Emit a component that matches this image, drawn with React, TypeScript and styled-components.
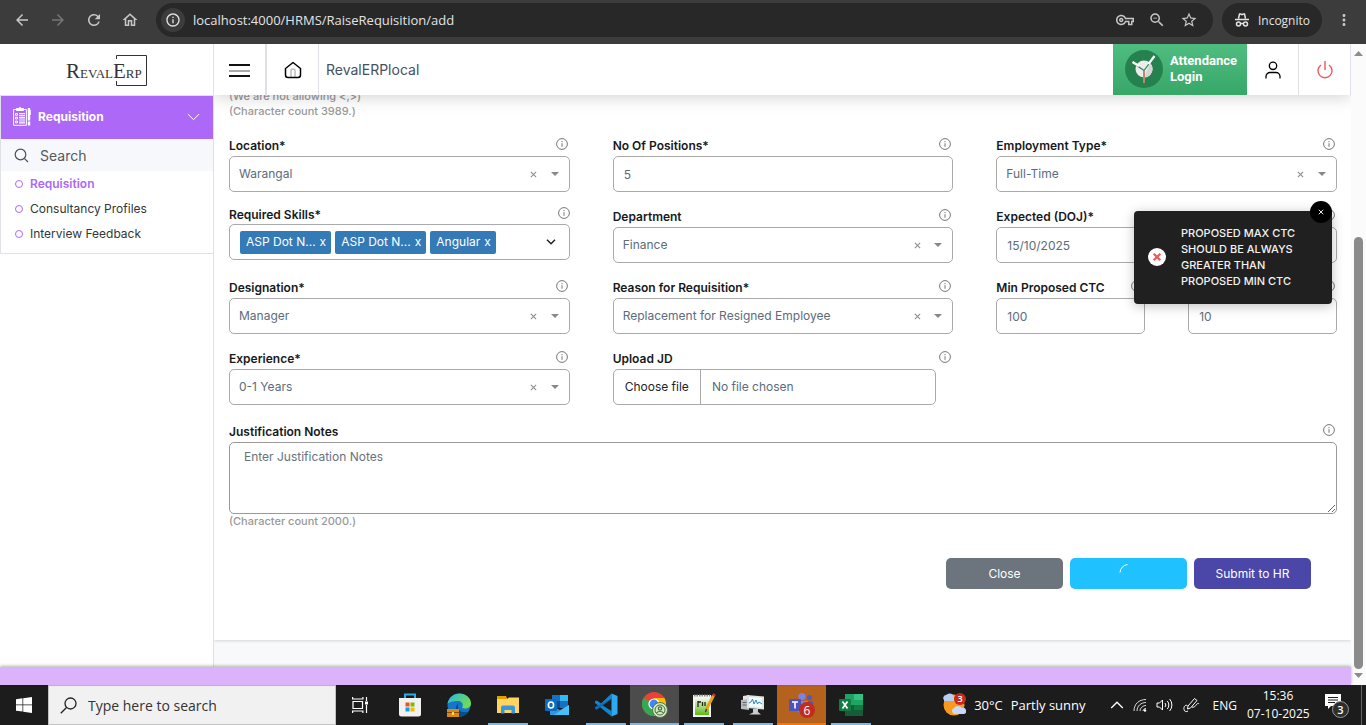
import { useState, type ReactNode } from 'react'
import styled, { createGlobalStyle } from 'styled-components'
import {
  MdArrowBack,
  MdArrowForward,
  MdMoreVert,
  MdOutlineHome,
  MdOutlineInfo,
  MdOutlineVpnKey,
  MdRefresh,
  MdStarBorder,
  MdZoomOut,
} from 'react-icons/md'

const GlobalStyle = createGlobalStyle`
  *, *::before, *::after {
    box-sizing: border-box;
  }

  body {
    margin: 0;
    overflow: hidden;
    font-family: Inter, 'Liberation Sans', sans-serif;
    font-size: 12px;
    color: #212529;
  }

  button, input, select, textarea {
    font: inherit;
    color: inherit;
  }

  button {
    padding: 0;
    border: 0;
    background: none;
    cursor: pointer;
  }

  a {
    color: inherit;
    text-decoration: none;
  }

  svg {
    display: block;
    flex-shrink: 0;
  }
`

const Shell = styled.div`
  display: flex;
  flex-direction: column;
  height: 100vh;
  background: #fff;
`

/* ---------- browser bar ---------- */

const BrowserBar = styled.header`
  display: flex;
  align-items: center;
  flex-shrink: 0;
  height: 44px;
  padding: 0 12px 4px;
  background: #3c3c3c;
  color: #c7c7c7;
  font-family: 'Open Sans', 'Noto Sans', sans-serif;
`

const NavButtons = styled.div`
  display: flex;
  gap: 16px;
  padding: 0 16px 0 0;
`

const NavButton = styled.button<{ $dim?: boolean }>`
  width: 20px;
  height: 20px;
  font-size: 18px;
  display: flex;
  align-items: center;
  justify-content: center;
  color: ${(props) => (props.$dim ? '#757575' : '#c7c7c7')};
`

const AddressBar = styled.div`
  display: flex;
  align-items: center;
  flex: 1;
  min-width: 0;
  height: 34px;
  padding: 0 14px 0 5px;
  border-radius: 17px;
  background: #282828;
`

const SiteInfo = styled.button`
  display: flex;
  align-items: center;
  justify-content: center;
  width: 24px;
  height: 24px;
  border-radius: 12px;
  background: #3c3c3c;
  color: #e3e3e3;
`

const Url = styled.input`
  flex: 1;
  min-width: 0;
  padding: 0 8px;
  border: 0;
  outline: 0;
  background: none;
  color: #e3e3e3;
  font-size: 13px;
`

const AddressActions = styled.div`
  display: flex;
  gap: 12px;
`

const Incognito = styled.div`
  display: flex;
  align-items: center;
  gap: 8px;
  height: 34px;
  margin: 0 12px 0 9px;
  padding: 0 12px;
  border-radius: 17px;
  background: #282828;
  color: #e3e3e3;
  font-size: 12px;
`

/* ---------- page ---------- */

const Page = styled.div`
  display: flex;
  flex: 1;
  min-height: 0;
`

const PageColumn = styled.div`
  display: flex;
  flex-direction: column;
  flex: 1;
  min-width: 0;
`

const Workspace = styled.div`
  display: flex;
  flex: 1;
  min-height: 0;
`

const Footer = styled.footer`
  flex-shrink: 0;
  height: 18px;
  background: #dcb2fb;
  box-shadow: 0 -1px 3px rgba(0, 0, 0, 0.3);
  z-index: 1;
`

const ScrollRail = styled.div`
  display: flex;
  flex-direction: column;
  align-items: center;
  width: 15px;
  padding: 7px 0;
  gap: 4px;
  background: #fbfbfb;
`

const ScrollTrack = styled.div`
  display: flex;
  flex-direction: column;
  flex: 1;
  width: 9px;

  &::before {
    content: '';
    flex: 29;
  }

  &::after {
    content: '';
    flex: 71;
    border-radius: 5px;
    background: #8b8b8b;
  }
`

const Sidebar = styled.aside`
  width: 214px;
  flex-shrink: 0;
  border-right: 1px solid #dee2e6;
`

const LogoBar = styled.div`
  display: flex;
  align-items: center;
  justify-content: center;
  height: 52px;
  border-bottom: 1px solid #dee2e6;
`

const Menu = styled.nav`
  border-left: 1px solid #dee2e6;
  border-bottom: 1px solid #dee2e6;
`

const MenuHead = styled.button`
  display: flex;
  align-items: center;
  width: 100%;
  height: 43px;
  padding: 0 13px 2px 12px;
  gap: 7px;
  background: #ad68f7;
  color: #fff;
  font-size: 12px;
  font-weight: 700;
  text-align: left;

  span {
    flex: 1;
  }
`

const MenuSearch = styled.label`
  display: flex;
  align-items: center;
  gap: 11px;
  height: 32px;
  padding-left: 13px;
  background: #f7f8fb;
  color: #495057;

  input {
    width: 100%;
    padding: 0;
    border: 0;
    outline: 0;
    background: none;
    font-size: 14px;
  }

  input::placeholder {
    color: #55595e;
    opacity: 1;
  }
`

const MenuLink = styled.a<{ $active?: boolean }>`
  display: flex;
  align-items: center;
  gap: 7px;
  height: 25px;
  padding-left: 14px;
  font-size: 12px;
  font-weight: ${(props) => (props.$active ? 600 : 400)};
  color: ${(props) => (props.$active ? '#ad68f7' : '#33363a')};

  &::before {
    content: '';
    width: 8px;
    height: 8px;
    border: 1px solid #ad68f7;
    border-radius: 50%;
  }

  &:last-child {
    margin-bottom: 7px;
  }
`

const Main = styled.main`
  position: relative;
  display: flex;
  flex-direction: column;
  flex: 1;
  min-width: 0;
  overflow: hidden;
  background: #f8f9fb;
`

const TopBar = styled.div`
  display: flex;
  flex-shrink: 0;
  height: 51px;
  background: #fff;
  box-shadow: 0 2px 16px rgba(0, 0, 0, 0.18);
  z-index: 1;
`

const TopCell = styled.button<{ $line?: number; $color?: string }>`
  display: flex;
  align-items: center;
  justify-content: center;
  width: ${(props) => 51 + (props.$line ?? 1)}px;
  border-right: ${(props) => props.$line ?? 1}px solid #dee2e6;
  color: ${(props) => props.$color ?? '#000'};
`

const CompanyName = styled.div`
  display: flex;
  align-items: center;
  flex: 1;
  padding: 0 8px 0 7px;
  font-size: 14px;
  color: #44525f;
`

const AttendanceButton = styled.button`
  display: flex;
  align-items: center;
  gap: 7px;
  padding: 0 10px 2px 12px;
  background: linear-gradient(#4fbd80, #37a768);
  color: #fff;
  font: bold 13px/16px Roboto, sans-serif;
  text-align: left;
`

const Card = styled.form`
  flex-shrink: 0;
  padding: 0 14px 51px 15px;
  background: #fff;
  box-shadow: 0 1px 3px rgba(0, 0, 0, 0.14);
`

const Hint = styled.p`
  margin: 0;
  font-size: 11px;
  line-height: 15px;
  font-weight: 500;
  color: #999;
`

/* the form is scrolled, its first hint is partly under the top bar */
const ScrolledHints = styled.div`
  margin: -6px 0 17px;
`

const FieldGrid = styled.div`
  display: grid;
  grid-template-columns: repeat(3, minmax(0, 1fr));
  gap: 15px 43px;
  margin-bottom: 17px;
`

const SplitField = styled.div`
  display: grid;
  grid-template-columns: repeat(2, minmax(0, 1fr));
  gap: 43px;
`

const FieldBox = styled.div`
  min-width: 0;
`

const FieldHead = styled.div<{ $tight?: boolean }>`
  display: flex;
  justify-content: space-between;
  height: ${(props) => (props.$tight ? 17 : 20)}px;
  padding: ${(props) => (props.$tight ? '0' : '2px 2px 0 0')};
  font-size: 12px;
  font-weight: 600;
  line-height: 16px;
  white-space: nowrap;
  color: #16191c;
`

const Control = styled.div`
  display: flex;
  align-items: center;
  height: 36px;
  border: 1px solid #aaa;
  border-radius: 5px;
  background: #fff;
  color: #5b6c7c;

  select {
    flex: 1;
    min-width: 0;
    height: 100%;
    padding: 0 0 1px 9px;
    border: 0;
    outline: 0;
    appearance: none;
    background: none;
  }
`

const ClearButton = styled.button`
  width: 24px;
  height: 24px;
  display: flex;
  align-items: center;
  justify-content: center;
  color: #8d8d8d;
`

const CaretSlot = styled.span`
  padding: 0 10px 0 5px;
`

const TextInput = styled.input`
  display: block;
  width: 100%;
  height: 36px;
  padding: 0 10px;
  border: 1px solid #aaa;
  border-radius: 5px;
  outline: 0;
  background: #fff;
  color: #5b6c7c;
`

const TagList = styled.div`
  display: flex;
  flex: 1;
  gap: 4px;
  padding-left: 10px;
`

const Tag = styled.span`
  display: flex;
  align-items: center;
  gap: 4px;
  height: 23px;
  padding: 0 5px 2px 6px;
  border-radius: 2px;
  background: #337ab7;
  color: #fff;
`

const SkillToggle = styled.button`
  padding: 0 13px;
`

const FilePicker = styled.label`
  display: flex;
  height: 36px;
  margin-right: 17px;
  border: 1px solid #aaa;
  border-radius: 5px;
  line-height: 34px;
  color: #5b6c7c;

  input {
    position: absolute;
    width: 1px;
    height: 1px;
    opacity: 0;
  }

  span {
    padding: 0 11px;
  }

  span:first-of-type {
    border-right: 1px solid #aaa;
    color: #212529;
  }
`

const Notes = styled.textarea`
  display: block;
  width: 100%;
  height: 72px;
  padding: 5px 14px;
  border: 1px solid #999;
  border-radius: 5px;
  outline: 0;
  resize: vertical;
  line-height: 18px;

  &::placeholder {
    color: #66727d;
    opacity: 1;
  }
`

const Actions = styled.div`
  display: flex;
  justify-content: flex-end;
  gap: 7px;
  margin: 29px 26px 0 0;
`

const ActionButton = styled.button<{ $color: string }>`
  display: flex;
  align-items: center;
  justify-content: center;
  width: 117px;
  height: 31px;
  padding-bottom: 1px;
  border-radius: 5px;
  background: ${(props) => props.$color};
  color: #fff;
`

const Toast = styled.div`
  position: absolute;
  top: 167px;
  right: 19px;
  display: flex;
  align-items: center;
  gap: 15px;
  width: 198px;
  height: 93px;
  padding: 0 20px 1px 14px;
  border-radius: 4px;
  background: #202020;
  box-shadow: 0 2px 12px rgba(0, 0, 0, 0.25);
  color: #f2f2f2;
  font-size: 11px;
  font-weight: 500;
  line-height: 16px;
  white-space: nowrap;
`

const ToastClose = styled.button`
  position: absolute;
  top: -10px;
  right: 0;
  display: flex;
  align-items: center;
  justify-content: center;
  width: 22px;
  height: 22px;
  border-radius: 11px;
  background: #000;
  color: #fff;
`

/* ---------- taskbar ---------- */

const Taskbar = styled.footer`
  display: flex;
  flex-shrink: 0;
  height: 40px;
  background: #1c1c1c;
  color: #fff;
  font-family: 'Open Sans', 'Noto Sans', sans-serif;
`

const StartButton = styled.button`
  display: flex;
  align-items: center;
  justify-content: center;
  width: 48px;
  flex-shrink: 0;
`

const TaskSearch = styled.label`
  display: flex;
  align-items: center;
  gap: 11px;
  width: 288px;
  flex-shrink: 0;
  padding-left: 11px;
  border: 1px solid #c2c2c2;
  background: #f1f1f1;
  color: #222;

  input {
    flex: 1;
    min-width: 0;
    padding: 0;
    border: 0;
    outline: 0;
    background: none;
    font-size: 14px;
  }

  input::placeholder {
    color: #333;
    opacity: 1;
  }
`

type AppState = 'open' | 'active' | 'alert'

const appBackground = { open: 'none', active: '#4c4c4c', alert: '#b5621f' }
const appUnderline = { open: '#76b9ed', active: '#76b9ed', alert: '#ff7300' }

const AppButton = styled.button<{ $state?: AppState }>`
  display: flex;
  flex-direction: column;
  align-items: center;
  flex-shrink: 0;
  width: 49px;
  background: ${(props) => (props.$state ? appBackground[props.$state] : 'none')};

  span {
    display: flex;
    flex: 1;
    align-items: center;
    padding-top: 2px;
  }

  &::after {
    content: '';
    width: ${(props) => (props.$state === 'open' ? '40px' : '100%')};
    height: 2px;
    background: ${(props) => (props.$state ? appUnderline[props.$state] : 'none')};
  }
`

const Tray = styled.div`
  display: flex;
  align-items: center;
  flex: 1;
  justify-content: flex-end;
  white-space: nowrap;
  font-size: 12px;
`

const Weather = styled.button`
  display: flex;
  align-items: center;
  gap: 8px;
  margin-right: 24px;
  font-size: 13px;
  color: #fff;
`

const TrayIcons = styled.div`
  display: flex;
  align-items: center;
  gap: 9px;
  margin-right: 13px;
`

const Clock = styled.time`
  width: 62px;
  margin: 0 16px 0 10px;
  font-size: 12px;
  line-height: 18px;
  text-align: center;
`

const DesktopEdge = styled.div`
  width: 5px;
  height: 40px;
  margin-left: 12px;
  border-left: 1px solid #666;
`

/* ---------- icons ---------- */

const InfoIcon = () => (
  <svg width="12" height="12" viewBox="0 0 12 12" fill="none" stroke="#777" aria-hidden>
    <circle cx="6" cy="6" r="5.4" />
    <path d="M6 5.2v3.6M6 3v1.2" />
  </svg>
)

const CaretIcon = () => (
  <svg width="8" height="4" viewBox="0 0 8 4" fill="#888">
    <path d="M0 0h8L4 4z" />
  </svg>
)

const CrossIcon = ({ size = 7, width = 1.2 }: { size?: number; width?: number }) => (
  <svg width={size} height={size} viewBox="0 0 8 8" stroke="currentColor" strokeWidth={width}>
    <path d="M1 1l6 6M7 1L1 7" />
  </svg>
)

const Logo = () => (
  <svg width="82" height="34" viewBox="0 0 82 34" role="img" aria-label="RevalERP">
    <path d="M50.500 6V2.500h30v30h-30V28" fill="none" stroke="#333" />
    <text x="0" y="25" fontFamily="Liberation Serif, serif" fontSize="21" fill="#333">
      R<tspan fontSize="13">EVAL</tspan>
      <tspan>E</tspan>
      <tspan fontSize="13">RP</tspan>
    </text>
  </svg>
)

const ClipboardIcon = () => (
  <svg width="18" height="19" viewBox="0 0 18 19" fill="none" stroke="#fff">
    <path d="M.6 2.500h12.800v15.800H.6z" />
    <path d="M3.500 3.500v-2h2L7 .4l1.500 1.100h2v2z" fill="#fff" />
    <path d="M2.500 6.500h2v1.800h-2zM2.500 10.200h2V12h-2zM2.500 14h2v1.800h-2z" />
    <path d="M6 6.500h6M6 8.300h6M6 10.300h6M6 12h6M6 14h6M6 15.800h6" strokeWidth="1.200" />
    <path d="M16 1v12.500M16 14.500v4" strokeWidth="2.400" />
    <path d="M17.600 3v5" strokeWidth=".8" />
  </svg>
)

const UrlHat = () => (
  <svg width="16" height="16" viewBox="0 0 16 16" fill="none" stroke="#e3e3e3" strokeWidth="1.500">
    <path d="M4.500 6.500l1-4.500h1.200l1.300.6 1.300-.6h1.200l1 4.500M1 7.500h14" />
    <circle cx="4.500" cy="12" r="2" />
    <circle cx="11.500" cy="12" r="2" />
    <path d="M6.500 11.500h3" />
  </svg>
)

const AttendanceIcon = () => (
  <svg width="38" height="38" viewBox="0 0 38 38">
    <circle cx="19" cy="19" r="19" fill="#25824f" />
    <circle cx="19" cy="19" r="8.500" fill="#ececec" />
    <path d="M25 13a8.500 8.500 0 0 1-6 14.500z" fill="#d5d5d5" />
    <path d="M19 21v12" stroke="#b98a67" strokeWidth="2" />
    <path d="M8 13l11 7.500L29.500 6.500" fill="none" stroke="#25824f" strokeWidth="1.200" />
    <path d="M7.500 12l6.500 4M23.500 14L29.500 6" stroke="#fff" strokeWidth="2.200" />
  </svg>
)

const StoreIcon = () => (
  <svg width="24" height="24" viewBox="0 0 24 24">
    <path d="M7 6V1.500h10V6" fill="none" stroke="#28b0ea" strokeWidth="2" />
    <path d="M1 5h22v16a2.500 2.500 0 0 1-2.500 2.500h-17A2.500 2.500 0 0 1 1 21z" fill="#f1f1f1" />
    <path fill="#f25022" d="M7.500 9.500h4v4h-4z" />
    <path fill="#7fba00" d="M12.500 9.500h4v4h-4z" />
    <path fill="#00a4ef" d="M7.500 14.500h4v4h-4z" />
    <path fill="#ffb900" d="M12.500 14.500h4v4h-4z" />
  </svg>
)

const EdgeIcon = () => (
  <svg width="24" height="24" viewBox="0 0 24 24">
    <defs>
      <linearGradient id="edgeTop" x1="0" y1="0" x2="1" y2="0.5">
        <stop offset="0" stopColor="#2bb5e8" />
        <stop offset="1" stopColor="#6fdc55" />
      </linearGradient>
    </defs>
    <circle cx="12" cy="12" r="11.500" fill="#1477c9" />
    <path d="M.5 11C2 4 7 .5 12.500.5 19 .5 24 5 24 10.500c0 3.500-3 5-6 5-2 0-3.500-.8-2.500-2 1-3-1-5.500-4.500-5.500C6 8 2 9 .5 11z" fill="url(#edgeTop)" />
    <path d="M12 10c-2 2-1.500 8 4 9 3 .5 5-.2 6.500-1.500C20 22 16 23.500 12 23.500 7 20 8 12 12 10z" fill="#0d4a8b" />
    <path d="M0 16h12v8H0z" fill="#d98a12" />
    <path d="M0 19h12v1H0z" fill="#8b4d07" />
    <path d="M5 19h2v3H5z" fill="#ffd34f" />
  </svg>
)

const FolderIcon = () => (
  <svg width="22" height="20" viewBox="0 0 22 20">
    <path d="M0 1h9l1.500 3H0z" fill="#e0a100" />
    <path d="M0 4h10l2-1.500h10V18H0z" fill="#ffd561" />
    <path d="M4 18.500v-6a2 2 0 0 1 2-2h10a2 2 0 0 1 2 2v6h-3.500V15h-7v3.500z" fill="#3a95dc" />
  </svg>
)

const OutlookIcon = () => (
  <svg width="24" height="22" viewBox="0 0 24 22">
    <path d="M7 1h16v13H7z" fill="#1a6fc4" />
    <path d="M15 1h8v6h-8z" fill="#35b8f1" />
    <path d="M7 7h8v7H7z" fill="#0b4f94" />
    <path d="M5 11l10 5 9-5v10H5z" fill="#2b9ae3" />
    <path d="M24 11v10H9z" fill="#47c1f5" />
    <rect y="5" width="12" height="12" rx="1" fill="#0f6cbd" />
    <ellipse cx="6" cy="11" rx="2.600" ry="3" fill="none" stroke="#fff" strokeWidth="1.600" />
  </svg>
)

const CodeIcon = () => (
  <svg width="24" height="24" viewBox="0 0 24 24">
    <path d="M17.500.5L7 10.600 2.800 7.400 1 8.300v1.600l16.500 13.600V18L8 12l9.500-6.500z" fill="#1484cf" />
    <path d="M17.500 5.500L1 14v1.800l1.800.9L17.500 6z" fill="#0b6cb5" />
    <path d="M17.500.5L23.500 3v18l-6 2.500z" fill="#2fa8f4" />
  </svg>
)

const ChromeIcon = () => (
  <svg width="26" height="26" viewBox="0 0 26 26">
    <circle cx="12" cy="12" r="12" fill="#ea4335" />
    <path d="M12 12L1.600 6A12 12 0 0 0 12 24z" fill="#34a853" />
    <path d="M12 24A12 12 0 0 0 22.400 6H12v6z" fill="#fbbc04" />
    <circle cx="12" cy="12" r="5.600" fill="#fff" />
    <circle cx="12" cy="12" r="4.400" fill="#4285f4" />
    <circle cx="18" cy="18" r="7.500" fill="#d7e8c4" stroke="#4a7a3c" strokeWidth="1" />
    <circle cx="18" cy="18" r="5" fill="none" stroke="#3f6f35" />
    <circle cx="18" cy="16.500" r="1.700" fill="none" stroke="#3f6f35" strokeWidth="1.200" />
    <path d="M14.500 21c1-2 6-2 7 0" fill="none" stroke="#3f6f35" strokeWidth="1.200" />
  </svg>
)

const NotepadIcon = () => (
  <svg width="24" height="25" viewBox="0 0 24 25">
    <defs>
      <linearGradient id="notepadPage" x1="0" y1="0" x2="0" y2="1">
        <stop offset="0" stopColor="#f4fae8" />
        <stop offset="1" stopColor="#5cba14" />
      </linearGradient>
    </defs>
    <path d="M1 2h18v22H1z" fill="#f4f4f4" />
    <path d="M3 5h14v17H3z" fill="url(#notepadPage)" />
    <path d="M2 2.500h16" stroke="#888" strokeDasharray="1.500 1" strokeWidth="2" />
    <path d="M6 8v6M6 9h3M10.500 9v4M13 9v4" stroke="#222" strokeWidth="1.300" />
    <path d="M21.500 2.500L14 17" stroke="#e8a11c" strokeWidth="3" />
    <path d="M22.500 1l-1 2" stroke="#c93a3a" strokeWidth="3" />
    <path d="M14.500 16l-1 3" stroke="#333" strokeWidth="1.200" />
  </svg>
)

const MonitorIcon = () => (
  <svg width="24" height="22" viewBox="0 0 24 22">
    <path d="M2 2l6-1v5H2z" fill="#e3e5e6" />
    <path d="M0 6l8-1v11l-8-1z" fill="#b8bcbe" />
    <path d="M1.500 8.500h4M1.500 11h4" stroke="#60676b" />
    <path d="M6 1l17 1.500v13L6 14z" fill="#dfe3e4" />
    <path d="M8 3l13 1v9.500L8 12.500z" fill="#f2fbff" />
    <path d="M8 9l2-1 1.500-3L13 10l2-4 1.500 4L18 8l3 2" fill="none" stroke="#3487b8" />
    <path d="M12 15h5v3l3 2.500H8l4-2z" fill="#c9cccd" />
  </svg>
)

const TeamsIcon = () => (
  <svg width="26" height="26" viewBox="0 0 26 26">
    <circle cx="13" cy="4.500" r="3.600" fill="#7b83eb" />
    <circle cx="20.500" cy="5.500" r="2.600" fill="#5059c9" />
    <path d="M17 9h7v7a4 4 0 0 1-7 2z" fill="#5059c9" />
    <path d="M8 9h11v8a6 6 0 0 1-11 2z" fill="#7b83eb" />
    <rect y="7" width="12" height="12" rx="1" fill="#4b53bc" />
    <path d="M3 10h6M6 10v6.500" stroke="#fff" strokeWidth="1.600" />
    <circle cx="18" cy="18" r="8" fill="#c42b1c" />
    <text x="18" y="22.500" textAnchor="middle" fontFamily="Open Sans, sans-serif" fontSize="12" fill="#fff">
      6
    </text>
  </svg>
)

const ExcelIcon = () => (
  <svg width="24" height="22" viewBox="0 0 24 22">
    <path d="M6 0h9v11H6z" fill="#21a366" />
    <path d="M15 0h9v6h-9z" fill="#33c481" />
    <path d="M15 6h9v5h-9z" fill="#21a366" />
    <path d="M6 11h18v11H6z" fill="#185c37" />
    <path d="M15 11h9v5h-9z" fill="#107c41" />
    <rect y="5" width="12" height="12" rx="1" fill="#107c41" />
    <path d="M3.500 7.500l5 7M8.500 7.500l-5 7" stroke="#fff" strokeWidth="1.700" />
  </svg>
)

const TaskViewIcon = () => (
  <svg width="17" height="16" viewBox="0 0 17 16" fill="none" stroke="#fff" strokeWidth="1.200">
    <path d="M1 4.500h9.500v7H1zM.6 0v2h10.300V0M.6 16v-2h10.300v2M14.500 0v4M14.500 8v8" />
    <path d="M13 4.500h3v3h-3z" fill="#fff" stroke="none" />
  </svg>
)

const WeatherIcon = () => (
  <svg width="24" height="24" viewBox="0 0 24 24">
    <circle cx="12" cy="12" r="10.500" fill="#f79a1e" />
    <path d="M2 7a3 3 0 0 1 2-5 5 5 0 0 1 8 1v5H2z" fill="#b7cdf3" />
    <path d="M12 21a3.200 3.200 0 0 1 0-6 5 5 0 0 1 8 0 3 3 0 0 1 2 6z" fill="#c8dafa" />
    <circle cx="18" cy="6" r="6" fill="#c42b1c" />
    <text x="18" y="9" textAnchor="middle" fontFamily="Open Sans, sans-serif" fontSize="9" fontWeight="600" fill="#fff">
      3
    </text>
  </svg>
)

const NotificationIcon = () => (
  <svg width="24" height="25" viewBox="0 0 24 25">
    <path d="M0 1h16v12H6l-3 3v-3H0z" fill="#fff" />
    <path d="M3 4.500h10M3 7h10M3 9.500h7" stroke="#1c1c1c" />
    <circle cx="15.500" cy="16.500" r="8" fill="#2e2e2e" stroke="#999" />
    <text x="15.500" y="20.500" textAnchor="middle" fontFamily="Open Sans, sans-serif" fontSize="11" fontWeight="600" fill="#fff">
      3
    </text>
  </svg>
)

/* ---------- parts ---------- */

interface FieldProps {
  id: string
  label?: string
  tight?: boolean
  children: ReactNode
}

function Field({ id, label, tight, children }: FieldProps) {
  return (
    <FieldBox>
      <FieldHead $tight={tight}>
        <label htmlFor={id}>{label}</label>
        <InfoIcon />
      </FieldHead>
      {children}
    </FieldBox>
  )
}

function SelectField({ id, label, initial }: { id: string; label: string; initial: string }) {
  const [value, setValue] = useState(initial)

  return (
    <Field id={id} label={label}>
      <Control>
        <select id={id} value={value} onChange={(e) => setValue(e.target.value)}>
          <option value=""></option>
          <option value={initial}>{initial}</option>
        </select>
        <ClearButton type="button" aria-label={`Clear ${label}`} onClick={() => setValue('')}>
          <CrossIcon />
        </ClearButton>
        <CaretSlot>
          <CaretIcon />
        </CaretSlot>
      </Control>
    </Field>
  )
}

function SkillsField() {
  const [skills, setSkills] = useState(['ASP Dot N...', 'ASP Dot N...', 'Angular'])

  return (
    <Field id="skills" label="Required Skills*" tight>
      <Control>
        <TagList>
          {skills.map((skill, index) => (
            <Tag key={index}>
              {skill}
              <button
                type="button"
                aria-label={`Remove ${skill}`}
                onClick={() => setSkills(skills.filter((_, i) => i !== index))}
              >
                x
              </button>
            </Tag>
          ))}
        </TagList>
        <SkillToggle type="button" id="skills" aria-label="Open skills">
          <svg width="10" height="6" viewBox="0 0 10 6" fill="none" stroke="#222" strokeWidth="1.500">
            <path d="M1 .7l4 4 4-4" />
          </svg>
        </SkillToggle>
      </Control>
    </Field>
  )
}

const apps: { name: string; icon: ReactNode; state?: AppState }[] = [
  { name: 'Task View', icon: <TaskViewIcon /> },
  { name: 'Microsoft Store', icon: <StoreIcon /> },
  { name: 'Edge', icon: <EdgeIcon /> },
  { name: 'File Explorer', icon: <FolderIcon />, state: 'open' },
  { name: 'Outlook', icon: <OutlookIcon /> },
  { name: 'Visual Studio Code', icon: <CodeIcon />, state: 'open' },
  { name: 'Chrome', icon: <ChromeIcon />, state: 'active' },
  { name: 'Notepad++', icon: <NotepadIcon />, state: 'open' },
  { name: 'Resource Monitor', icon: <MonitorIcon />, state: 'open' },
  { name: 'Teams', icon: <TeamsIcon />, state: 'alert' },
  { name: 'Excel', icon: <ExcelIcon />, state: 'open' },
]

function BrowserChrome() {
  return (
    <BrowserBar>
      <NavButtons>
        <NavButton aria-label="Back">
          <MdArrowBack />
        </NavButton>
        <NavButton $dim aria-label="Forward">
          <MdArrowForward />
        </NavButton>
        <NavButton aria-label="Reload">
          <MdRefresh />
        </NavButton>
        <NavButton aria-label="Home">
          <MdOutlineHome />
        </NavButton>
      </NavButtons>
      <AddressBar>
        <SiteInfo aria-label="Site information">
          <MdOutlineInfo size={16} />
        </SiteInfo>
        <Url aria-label="Address" defaultValue="localhost:4000/HRMS/RaiseRequisition/add" />
        <AddressActions>
          <NavButton aria-label="Passwords">
            <MdOutlineVpnKey />
          </NavButton>
          <NavButton aria-label="Zoom">
            <MdZoomOut />
          </NavButton>
          <NavButton aria-label="Bookmark">
            <MdStarBorder />
          </NavButton>
        </AddressActions>
      </AddressBar>
      <Incognito>
        <UrlHat />
        Incognito
      </Incognito>
      <NavButton aria-label="Menu">
        <MdMoreVert />
      </NavButton>
    </BrowserBar>
  )
}

function SideMenu() {
  return (
    <Sidebar>
      <LogoBar>
        <Logo />
      </LogoBar>
      <Menu>
        <MenuHead>
          <ClipboardIcon />
          <span>Requisition</span>
          <svg width="13" height="8" viewBox="0 0 13 8" fill="none" stroke="#fff">
            <path d="M.8 1l5.700 5.700L12.200 1" />
          </svg>
        </MenuHead>
        <MenuSearch>
          <svg width="15" height="15" viewBox="0 0 15 15" fill="none" stroke="#495057" strokeWidth="1.200">
            <circle cx="6.500" cy="6.500" r="5.300" />
            <path d="M10.300 10.300l3.700 3.700" />
          </svg>
          <input placeholder="Search" aria-label="Search menu" />
        </MenuSearch>
        <MenuLink href="#requisition" $active>
          Requisition
        </MenuLink>
        <MenuLink href="#profiles">Consultancy Profiles</MenuLink>
        <MenuLink href="#feedback">Interview Feedback</MenuLink>
      </Menu>
    </Sidebar>
  )
}

function Header() {
  return (
    <TopBar>
      <TopCell $line={2} aria-label="Toggle menu">
        <svg width="21" height="14" viewBox="0 0 21 14">
          <path d="M0 2h21M0 13h21" stroke="#111" strokeWidth="2" />
          <path d="M0 8h21" stroke="#aaa" strokeWidth="2" />
        </svg>
      </TopCell>
      <TopCell $line={1} aria-label="Home">
        <svg width="18" height="18" viewBox="0 0 18 18" fill="none" stroke="#000" strokeWidth="1.500" strokeLinejoin="round">
          <path d="M7 16.500V10a2 2 0 0 1 4 0v6.500" stroke="#bbb" />
          <path d="M1.500 7.500L9 1.500l7.500 6v6.500a2.500 2.500 0 0 1-2.500 2.500H4A2.500 2.500 0 0 1 1.500 14z" />
        </svg>
      </TopCell>
      <CompanyName>RevalERPlocal</CompanyName>
      <AttendanceButton>
        <AttendanceIcon />
        <span>
          Attendance
          <br />
          Login
        </span>
      </AttendanceButton>
      <TopCell aria-label="Profile">
        <svg width="16" height="18" viewBox="0 0 16 18" fill="none" stroke="currentColor" strokeWidth="1.300">
          <circle cx="8" cy="4.800" r="3.700" />
          <path d="M1 17.500V15.500a4 4 0 0 1 4-4h6a4 4 0 0 1 4 4v2" />
        </svg>
      </TopCell>
      <TopCell $color="#f0575a" aria-label="Log out">
        <svg width="16" height="18" viewBox="0 0 16 18" fill="none" stroke="currentColor" strokeWidth="1.400">
          <path d="M8 0v9M4 4a7 7 0 1 0 8 0" />
        </svg>
      </TopCell>
    </TopBar>
  )
}

function RequisitionForm() {
  return (
    <Card onSubmit={(e) => e.preventDefault()}>
      <ScrolledHints>
        <Hint>{'(We are not allowing <,>)'}</Hint>
        <Hint>(Character count 3989.)</Hint>
      </ScrolledHints>
      <FieldGrid>
        <SelectField id="location" label="Location*" initial="Warangal" />
        <Field id="positions" label="No Of Positions*">
          <TextInput id="positions" defaultValue="5" />
        </Field>
        <SelectField id="employment" label="Employment Type*" initial="Full-Time" />
        <SkillsField />
        <SelectField id="department" label="Department" initial="Finance" />
        <Field id="doj" label="Expected (DOJ)*">
          <TextInput id="doj" defaultValue="15/10/2025" />
        </Field>
        <SelectField id="designation" label="Designation*" initial="Manager" />
        <SelectField id="reason" label="Reason for Requisition*" initial="Replacement for Resigned Employee" />
        <SplitField>
          <Field id="minCtc" label="Min Proposed CTC">
            <TextInput id="minCtc" defaultValue="100" />
          </Field>
          <Field id="maxCtc">
            <TextInput id="maxCtc" aria-label="Max Proposed CTC" defaultValue="10" />
          </Field>
        </SplitField>
        <SelectField id="experience" label="Experience*" initial="0-1 Years" />
        <Field id="jd" label="Upload JD">
          <FilePicker>
            <input id="jd" type="file" />
            <span>Choose file</span>
            <span>No file chosen</span>
          </FilePicker>
        </Field>
      </FieldGrid>
      <Field id="notes" label="Justification Notes">
        <Notes id="notes" placeholder="Enter Justification Notes" />
      </Field>
      <Hint>(Character count 2000.)</Hint>
      <Actions>
        <ActionButton type="button" $color="#6c757d">
          Close
        </ActionButton>
        <ActionButton type="button" $color="#1fc1ff" aria-label="Saving">
          <svg width="22" height="22" viewBox="0 0 22 22" fill="none" stroke="#fff">
            <path d="M2 10.500A8.500 8.500 0 0 1 9.500 2.500" />
          </svg>
        </ActionButton>
        <ActionButton type="submit" $color="#4a47a9">
          Submit to HR
        </ActionButton>
      </Actions>
    </Card>
  )
}

function WindowsBar() {
  return (
    <Taskbar>
      <StartButton aria-label="Start">
        <svg width="16" height="16" viewBox="0 0 16 16" fill="#fff">
          <path d="M0 2.200l6.500-.9v6.300H0zM7.200 1.200L16 0v7.600H7.200zM0 8.300h6.500v6.300L0 13.800zM7.200 8.300H16V16l-8.800-1.200z" />
        </svg>
      </StartButton>
      <TaskSearch>
        <svg width="17" height="17" viewBox="0 0 17 17" fill="none" stroke="#222" strokeWidth="1.300">
          <circle cx="10.500" cy="6.500" r="5.500" />
          <path d="M6.500 10.500L.8 16.200" />
        </svg>
        <input placeholder="Type here to search" aria-label="Type here to search" />
      </TaskSearch>
      {apps.map((app) => (
        <AppButton key={app.name} $state={app.state} aria-label={app.name}>
          <span>{app.icon}</span>
        </AppButton>
      ))}
      <Tray>
        <Weather>
          <WeatherIcon />
          <span>30°C</span>
          <span>Partly sunny</span>
        </Weather>
        <TrayIcons>
          <svg width="14" height="8" viewBox="0 0 14 8" fill="none" stroke="#fff" strokeWidth="1.300">
            <path d="M1.200 7L7 1.200 12.800 7" />
          </svg>
          <svg width="14" height="14" viewBox="0 0 14 14" fill="none" stroke="#ddd">
            <path d="M1 13C1 6 6 1.500 13 1.500M4 13c0-5 4-8.500 9-8.500M7 13c0-3 3-5.500 6-5.500M10 13c0-1.500 1.500-2.500 3-2.500" />
            <circle cx="12" cy="12.500" r="1.200" fill="#fff" stroke="none" />
          </svg>
          <svg width="18" height="14" viewBox="0 0 18 14" fill="none" stroke="#fff">
            <path d="M1 5h2.500l3-3v10l-3-3H1zM9 5a3 3 0 0 1 0 4M11.300 3a6 6 0 0 1 0 8M13.600 1a9 9 0 0 1 0 12" />
          </svg>
          <svg width="17" height="16" viewBox="0 0 17 16" fill="none" stroke="#fff">
            <path d="M5 9L11.500 1.500 14 3.500 7.500 11l-3 1zM4.500 8.500C2 7.500.5 10 1 12.500s2.500 2.500 4 1.500M9 10c2 1 3.500-1 4.500-2.500s2.500-1 2.500-.5" />
          </svg>
        </TrayIcons>
        <span>ENG</span>
        <Clock>
          15:36
          <br />
          07-10-2025
        </Clock>
        <NotificationIcon />
        <DesktopEdge />
      </Tray>
    </Taskbar>
  )
}

function App() {
  const [showToast, setShowToast] = useState(true)

  return (
    <Shell>
      <GlobalStyle />
      <BrowserChrome />
      <Page>
        <PageColumn>
          <Workspace>
            <SideMenu />
            <Main>
              <Header />
              <RequisitionForm />
              {showToast && (
                <Toast role="alert">
                  <svg width="18" height="18" viewBox="0 0 18 18">
                    <circle cx="9" cy="9" r="9" fill="#fff" />
                    <path d="M5.700 5.700l6.600 6.600M12.300 5.700l-6.600 6.600" stroke="#f0575a" strokeWidth="2.200" />
                  </svg>
                  <span>
                    PROPOSED MAX CTC
                    <br />
                    SHOULD BE ALWAYS
                    <br />
                    GREATER THAN
                    <br />
                    PROPOSED MIN CTC
                  </span>
                  <ToastClose aria-label="Dismiss" onClick={() => setShowToast(false)}>
                    <CrossIcon size={6} />
                  </ToastClose>
                </Toast>
              )}
            </Main>
          </Workspace>
          <Footer />
        </PageColumn>
        <ScrollRail>
          <svg width="9" height="5" viewBox="0 0 9 5" fill="#8b8b8b">
            <path d="M0 5h9L4.500 0z" />
          </svg>
          <ScrollTrack />
          <svg width="9" height="5" viewBox="0 0 9 5" fill="#8b8b8b">
            <path d="M0 0h9L4.500 5z" />
          </svg>
        </ScrollRail>
      </Page>
      <WindowsBar />
    </Shell>
  )
}

export default App
